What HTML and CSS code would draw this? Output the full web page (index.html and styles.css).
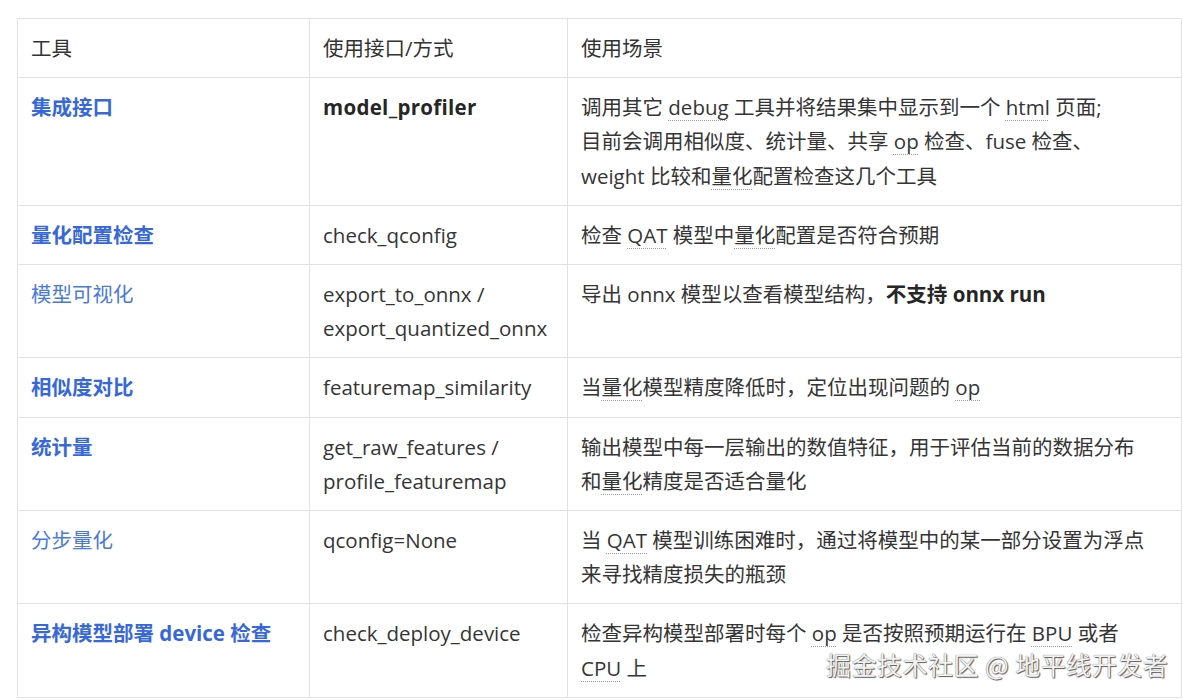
FILE: index.html
```html
<!DOCTYPE html>
<html lang="zh-CN">
<head>
<meta charset="utf-8">
<title>调试工具</title>
<link rel="stylesheet" href="styles.css">
</head>
<body>
<div class="page">
  <table class="tools">
    <colgroup>
      <col class="c1">
      <col class="c2">
      <col class="c3">
    </colgroup>
    <thead>
      <tr><th>工具</th><th>使用接口/方式</th><th>使用场景</th></tr>
    </thead>
    <tbody>
      <tr>
        <td><strong class="link">集成接口</strong></td>
        <td><strong class="api">model_profiler</strong></td>
        <td class="lines">调用其它 <span class="term">debug</span> 工具并将结果集中显示到一个 <span class="term">html</span> 页面;<br>目前会调用相似度、统计量、共享 <span class="term">op</span> 检查、fuse 检查、<br>weight 比较和<span class="term">量化</span>配置检查这几个工具</td>
      </tr>
      <tr>
        <td><strong class="link">量化配置检查</strong></td>
        <td>check_qconfig</td>
        <td>检查 <span class="term">QAT</span> 模型中<span class="term">量化</span>配置是否符合预期</td>
      </tr>
      <tr>
        <td><span class="link">模型可视化</span></td>
        <td>export_to_onnx / export_quantized_onnx</td>
        <td>导出 onnx 模型以查看模型结构，<strong class="em">不支持 onnx run</strong></td>
      </tr>
      <tr>
        <td><strong class="link">相似度对比</strong></td>
        <td>featuremap_similarity</td>
        <td>当<span class="term">量化</span>模型精度降低时，定位出现问题的 <span class="term">op</span></td>
      </tr>
      <tr>
        <td><strong class="link">统计量</strong></td>
        <td>get_raw_features / profile_featuremap</td>
        <td class="lines">输出模型中每一层输出的数值特征，用于评估当前的数据分布<br>和<span class="term">量化</span>精度是否适合量化</td>
      </tr>
      <tr>
        <td><span class="link">分步量化</span></td>
        <td>qconfig=None</td>
        <td class="lines">当 <span class="term">QAT</span> 模型训练困难时，通过将模型中的某一部分设置为浮点<br>来寻找精度损失的瓶颈</td>
      </tr>
      <tr>
        <td><strong class="link">异构模型部署 device 检查</strong></td>
        <td>check_deploy_device</td>
        <td class="lines">检查异构模型部署时每个 <span class="term">op</span> 是否按照预期运行在 <span class="term">BPU</span> 或者<br><span class="term">CPU</span> 上</td>
      </tr>
    </tbody>
  </table>

  <div class="watermarks" aria-hidden="true">
    <span class="wm wm1">李欣欣 2856 地平线</span>
    <span class="wm wm2">李欣欣 2856 地平线</span>
    <span class="wm wm3">李欣欣 2856 地平线</span>
    <span class="wm wm4">李欣欣 2856 地平线</span>
    <span class="wm wm5">李欣欣 2856 地平线</span>
    <span class="wm wm6">李欣欣 2856 地平线</span>
    <span class="wm wm7">李欣欣 2856 地平线</span>
    <span class="wm wm8">李欣欣 2856 地平线</span>
    <span class="wm wm9">李欣欣 2856 地平线</span>
    <span class="wm wm10">李欣欣 2856 地平线</span>
  </div>

  <div class="source-mark">掘金技术社区 @ 地平线开发者</div>
</div>
</body>
</html>
```

FILE: styles.css
```css
* {
  box-sizing: border-box;
}

html, body {
  margin: 0;
  padding: 0;
  background: #ffffff;
}

body {
  font-family: "Open Sans", "Noto Sans CJK SC", sans-serif;
  font-size: 20.5px;
  line-height: 34.2px;
  color: #353535;
}

.page {
  position: relative;
  width: 1183px;
  height: 700px;
  padding: 18px 2px 0 17px;
  overflow: hidden;
}

.tools {
  width: 1164px;
  border-collapse: collapse;
  table-layout: fixed;
}

.c1 { width: 292px; }
.c2 { width: 258px; }
.c3 { width: 614px; }

.tools th,
.tools td {
  border: 1px solid #e2e2e2;
  padding: 12px 12px 12px 13px;
  text-align: left;
  vertical-align: top;
  font-weight: 400;
}

.tools th {
  color: #333333;
}

.tools td.lines {
  white-space: nowrap;
}

.link {
  color: #3d6fdc;
}

strong.link {
  font-weight: 700;
  color: #3768da;
}

span.link {
  color: #4a7ad9;
}

.api,
.em {
  font-weight: 700;
  color: #262626;
}

.api {
  letter-spacing: 0.3px;
}

.term {
  text-decoration: underline dotted #9a9a9a;
  text-decoration-thickness: 1px;
  text-underline-offset: 5px;
}

.watermarks {
  position: absolute;
  inset: 0;
  pointer-events: none;
}

.wm {
  position: absolute;
  font-size: 20px;
  font-weight: 700;
  color: rgba(0, 0, 0, 0.022);
  white-space: nowrap;
  transform: rotate(-20deg);
}

.wm1 { left: 90px; top: 178px; }
.wm2 { left: 370px; top: 50px; }
.wm3 { left: 930px; top: 50px; }
.wm4 { left: 640px; top: 190px; }
.wm5 { left: 370px; top: 345px; }
.wm6 { left: 930px; top: 315px; }
.wm7 { left: 90px; top: 445px; }
.wm8 { left: 640px; top: 440px; }
.wm9 { left: 370px; top: 590px; }
.wm10 { left: 930px; top: 585px; }

.source-mark {
  position: absolute;
  left: 826px;
  top: 646px;
  font-family: "Noto Sans CJK SC", sans-serif;
  font-size: 25px;
  line-height: 36px;
  letter-spacing: 0.5px;
  color: #f2f2f2;
  text-shadow: 0 0 1px #4a4a4a, 1px 1px 1px #5e5e5e;
}
```
